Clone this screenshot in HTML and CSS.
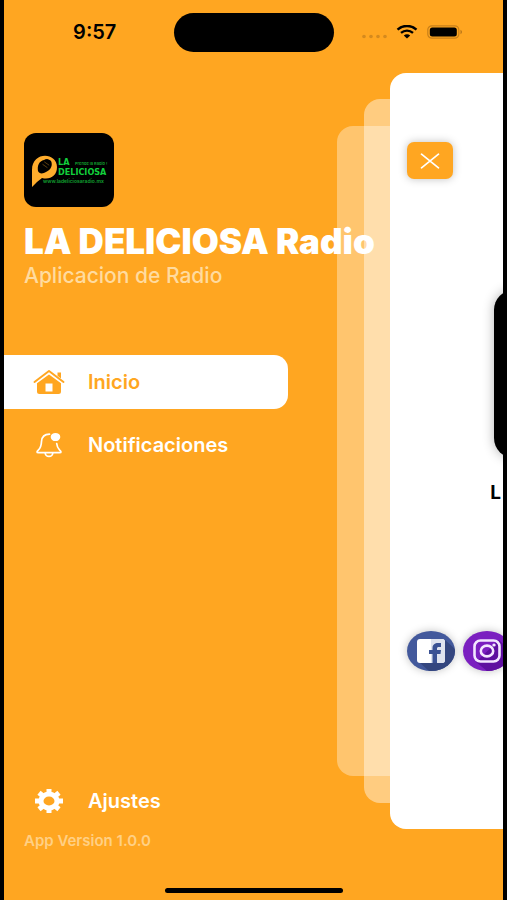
FILE: index.html
```html
<!DOCTYPE html>
<html lang="es">

<head>
    <meta charset="UTF-8">
    <meta name="viewport" content="width=device-width, initial-scale=1.0">
    <title>LA DELICIOSA Radio</title>
    <link rel="stylesheet" href="styles.css">
</head>

<body>
    <div class="screen">
        <header class="status-bar">
            <span class="time">9:57</span>
            <span class="island"></span>
            <div class="status-icons">
                <svg width="26" height="14" viewBox="0 0 26 14" fill="#d58a1e">
                    <circle cx="3" cy="11.500" r="1.800" />
                    <circle cx="10" cy="11.500" r="1.800" />
                    <circle cx="17" cy="11.500" r="1.800" />
                    <circle cx="24" cy="11.500" r="1.800" />
                </svg>
                <svg width="22" height="14" viewBox="0 0 22 14" fill="none" stroke="#000" stroke-width="2.4">
                    <path d="M1.5 4.6C7-.3 15-.3 20.500 4.600" />
                    <path d="M5 7.900C8.500 4.900 13.500 4.900 17 7.900" />
                    <path d="M7.800 10.500C9.700 8.900 12.300 8.900 14.200 10.500L11 13.500Z" fill="#000" stroke="none" />
                </svg>
                <svg width="36" height="14" viewBox="0 0 36 14">
                    <rect x=".8" y=".8" width="31" height="12.400" rx="4" fill="none" stroke="#c98019" stroke-width="1.200" />
                    <rect x="2.800" y="2.400" width="27" height="9.200" rx="2.500" />
                    <path d="M33.500 4.800C35.500 5.600 35.500 8.400 33.500 9.200Z" fill="#b87518" />
                </svg>
            </div>
        </header>

        <div class="sheet sheet-back"></div>
        <div class="sheet sheet-middle"></div>

        <div class="drawer">
            <svg class="logo" viewBox="0 0 90 74" role="img" aria-label="LA DELICIOSA">
                <path fill-rule="evenodd" d="M8 54V37C8 18 33 19 33 34C33 43 26 47 18 45L13 49ZM20 27C15 28 13 33 14 38C15 41 19 41 22 39C27 37 29 32 27 28C25 26 22 26 20 27Z" fill="#ffad2d" />
                <g transform="rotate(35 21 33)">
                    <rect x="17" y="26" width="8" height="12" rx="4" />
                    <path d="M18 30H24M18 33H24" stroke="#8a5d18" stroke-width=".6" />
                </g>
                <text class="logo-name" x="34" y="32">LA</text>
                <text class="logo-tag" x="51" y="32">Prende la Radio !</text>
                <text class="logo-name" x="34" y="42">DELICIOSA</text>
                <text class="logo-site" x="19" y="50">www.ladeliciosaradio.mx</text>
            </svg>
            <h1>LA DELICIOSA Radio</h1>
            <p class="subtitle">Aplicacion de Radio</p>

            <nav class="menu">
                <a href="#" class="menu-item active">
                    <svg width="34" height="28" viewBox="0 0 34 28" fill="currentColor">
                        <path d="M2.500 14L17 3L31.500 14" fill="none" stroke="currentColor" stroke-width="2" stroke-linecap="round" stroke-linejoin="round" />
                        <path d="M25.500 4.500H29V10.500L25.500 7.800Z" />
                        <path fill-rule="evenodd" d="M17 6.500L29 15.200V23.500Q29 26 26.500 26H7.500Q5 26 5 23.500V15.200ZM13.500 15.500V23.500H20.500V15.500Z" />
                    </svg>
                    <span>Inicio</span>
                </a>
                <a href="#" class="menu-item">
                    <svg width="34" height="28" viewBox="0 0 34 28" fill="none" stroke="currentColor" stroke-width="1.700" stroke-linecap="round" stroke-linejoin="round">
                        <path d="M17.500 3.200C12 3.200 9.800 6.500 9.500 10.500C9.300 15 8.500 17 6.500 18.800C4.500 20.600 4.500 21.600 6.500 21.600H27.500C29.500 21.600 29.500 20.600 27.500 18.800C25.800 17.200 25 15.500 24.700 12.500" />
                        <path d="M13.200 22C13.600 26.500 20.400 26.500 20.800 22" />
                        <ellipse cx="23.500" cy="6" rx="4.800" ry="4.100" fill="currentColor" stroke="none" />
                    </svg>
                    <span>Notificaciones</span>
                </a>
                <a href="#" class="menu-item settings">
                    <svg width="34" height="28" viewBox="0 0 34 28">
                        <ellipse cx="17" cy="14" rx="8" ry="7" fill="none" stroke="currentColor" stroke-width="5" />
                        <path d="M17 2V6M17 22V26M3 14H8M26 14H31M7 5.700L11 9M23 19L27 22.300M27 5.700L23 9M11 19L7 22.300" stroke="currentColor" stroke-width="5" stroke-linejoin="round" />
                    </svg>
                    <span>Ajustes</span>
                </a>
            </nav>
            <p class="version">App Version 1.0.0</p>
        </div>

        <main class="sheet player">
            <button class="close" aria-label="Cerrar">
                <svg width="20" height="16" viewBox="0 0 20 16" fill="none" stroke="#fff" stroke-width="1.700" stroke-linecap="round">
                    <path d="M1.500 1.200L18.500 14.800M18.500 1.200L1.500 14.800" />
                </svg>
            </button>
            <div class="cover"></div>
            <h2>L</h2>
            <div class="social">
                <a href="#" class="facebook" aria-label="Facebook">
                    <svg width="48" height="40" viewBox="0 0 48 40">
                        <path d="M37 8L48 18V40H22L12 31Z" fill="#34467f" />
                        <rect x="10" y="8" width="28" height="24" rx="3" fill="#fff" />
                        <path d="M24 8H35Q38 8 38 11V29Q38 32 35 32H24Z" fill="#dfe3ee" />
                        <path d="M25.500 32V23H22V19H25.500V17C25.500 13.500 28 12 31 12H34V16H32C30.500 16 30 16.500 30 17.500V19H34L33.500 23H30V32Z" fill="#3b5294" />
                    </svg>
                </a>
                <a href="#" class="instagram" aria-label="Instagram">
                    <svg width="48" height="40" viewBox="0 0 48 40">
                        <path d="M36 9L48 20V40H24L13 31Z" fill="#5e0fa0" />
                        <g fill="none" stroke="#f3e6ff" stroke-width="2.600">
                            <rect x="11.500" y="9.500" width="25" height="21" rx="6" />
                            <ellipse cx="24" cy="20" rx="6.200" ry="5.400" />
                        </g>
                        <ellipse cx="31" cy="14" rx="1.700" ry="1.500" fill="#f3e6ff" />
                    </svg>
                </a>
            </div>
        </main>

        <div class="home-indicator"></div>
    </div>
</body>

</html>
```
FILE: styles.css
```css
/* General Reset */
* {
    box-sizing: border-box;
}

body {
    margin: 0;
    font-family: Inter, "Liberation Sans", sans-serif;
    background-color: #000;
    color: #fff;
}

h1,
h2,
p {
    margin: 0;
}

a {
    color: inherit;
    text-decoration: none;
}

svg {
    display: block;
}

/* Every layer shares the same rows, later ones lie on top */
.screen {
    display: grid;
    grid-template-columns: minmax(0, 1fr);
    grid-template-rows: 73px 1fr 51px 20px;
    min-height: 100vh;
    margin: 0 4px;
    background-color: #ffa621;
    overflow: hidden;
}

/* Status Bar */
.status-bar {
    grid-area: 1 / 1;
    display: grid;
    grid-template-columns: 1fr 160px 1fr;
    align-items: center;
    height: 64px;
    color: #000;
}

.time {
    padding-left: 12px;
    font-size: 20px;
    font-weight: 600;
    text-align: center;
}

.island {
    height: 39px;
    border-radius: 20px;
    background-color: #000;
}

.status-icons {
    display: flex;
    justify-content: center;
    gap: 9px;
    padding-right: 12px;
}

/* Stacked Sheets */
.sheet {
    grid-area: 2 / 1;
    border-radius: 16px 0 0 16px;
}

.sheet-back {
    margin: 53px 0 53px 66.8%;
    background-color: rgba(255, 255, 255, 0.35);
}

.sheet-middle {
    margin: 26px 0 26px 72.2%;
    background-color: rgba(255, 255, 255, 0.43);
}

/* Drawer */
.drawer {
    grid-area: 2 / 1 / 4 / 2;
    display: flex;
    flex-direction: column;
    padding: 60px 0 29px;
}

.logo {
    width: 90px;
    height: 74px;
    margin-left: 20px;
    border-radius: 12px;
    background-color: #000;
}

.logo-name {
    font-family: "Liberation Sans Narrow", "DejaVu Sans Condensed", sans-serif;
    font-size: 9px;
    font-weight: 700;
    fill: #12d03c;
}

.logo-tag,
.logo-site {
    font-size: 4px;
    font-weight: 600;
    fill: #12a532;
}

.logo-site {
    font-size: 5px;
}

h1 {
    margin: 14px 0 0 20px;
    font-size: 35px;
    font-weight: 900;
    line-height: 40px;
    white-space: nowrap;
}

.subtitle {
    margin-left: 20px;
    font-size: 21px;
    font-weight: 500;
    line-height: 30px;
    color: #ffdb9f;
}

.menu {
    flex: 1;
    display: flex;
    flex-direction: column;
    gap: 9px;
    margin-top: 64px;
}

.menu-item {
    display: flex;
    align-items: center;
    gap: 22px;
    width: 57%;
    height: 54px;
    padding-left: 28px;
    border-radius: 0 14px 14px 0;
    font-size: 20px;
    font-weight: 600;
}

.menu-item.active {
    background-color: #fff;
    color: #ffa621;
}

.settings {
    margin-top: auto;
}

.version {
    margin: 3px 0 0 20px;
    font-size: 15px;
    font-weight: 600;
    line-height: 20px;
    color: #ffd085;
}

/* Player */
.player {
    display: flex;
    flex-direction: column;
    align-items: flex-start;
    margin-left: 77.4%;
    padding: 69px 0 0 17px;
    background-color: #fff;
    color: #000;
    overflow: hidden;
}

.close {
    display: grid;
    place-items: center;
    width: 46px;
    height: 37px;
    padding: 0;
    border: none;
    border-radius: 7px;
    background-color: #ffa621;
    box-shadow: 0 0 8px rgba(0, 0, 0, 0.25);
    cursor: pointer;
}

.cover {
    flex: none;
    width: 200px;
    height: 168px;
    margin: 111px 0 0 87px;
    border-radius: 20px;
    background-color: #000;
    box-shadow: 0 0 12px rgba(0, 0, 0, 0.3);
}

h2 {
    margin: 23px 0 0 83px;
    font-size: 19px;
    font-weight: 700;
    line-height: 24px;
}

.social {
    display: flex;
    gap: 8px;
    margin-top: 126px;
}

.social a {
    border-radius: 50%;
    box-shadow: 0 0 8px rgba(0, 0, 0, 0.25);
    overflow: hidden;
}

.facebook {
    background-color: #43599c;
}

.instagram {
    background-color: #7b1fc0;
}

.home-indicator {
    grid-area: 4 / 1;
    align-self: start;
    justify-self: center;
    width: 178px;
    height: 5px;
    margin-top: 8px;
    border-radius: 3px;
    background-color: #000;
}
```
